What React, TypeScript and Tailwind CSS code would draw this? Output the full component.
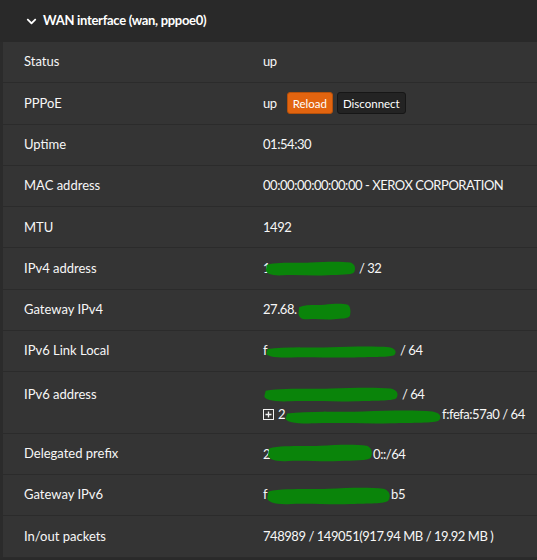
import { FaChevronDown } from "react-icons/fa";

function Blob({ w, h, className = "" }: { w: number; h: number; className?: string }) {
  return (
    <svg
      width={w}
      height={h}
      viewBox="0 0 100 20"
      preserveAspectRatio="none"
      className={"inline-block " + className}
    >
      <path
        d="M2 5 C15 1 35 3 50 2 C65 1 82 0 94 2 C99 4 100 10 98 15 C95 19 82 18 68 19 C52 20 35 18 20 19 C8 20 1 17 1 12 Z"
        fill="#0a840a"
      />
    </svg>
  );
}

function PlusSquare() {
  return (
    <svg width="11" height="11" viewBox="0 0 11 11" className="inline-block align-[-1px]">
      <rect x="0.5" y="0.5" width="10" height="10" fill="none" stroke="#f2f2f2" strokeWidth="1" />
      <path d="M5.5 2.5 V8.5 M2.5 5.5 H8.5" stroke="#f2f2f2" strokeWidth="1.3" />
    </svg>
  );
}

type Row = { label: string; value: React.ReactNode; tall?: boolean };

const ROWS: Row[] = [
  { label: "Status", value: "up" },
  {
    label: "PPPoE",
    value: (
      <span className="flex items-center">
        <span>up</span>
        <button className="ml-[10px] h-[22px] rounded-[3px] border border-[#b5500a] bg-[#e2640f] px-[5px] text-[11.5px] leading-none tracking-normal text-white">
          Reload
        </button>
        <button className="ml-[4px] h-[22px] rounded-[3px] border border-[#161616] bg-[#232323] px-[5px] text-[11.5px] leading-none tracking-normal text-white">
          Disconnect
        </button>
      </span>
    ),
  },
  { label: "Uptime", value: "01:54:30" },
  { label: "MAC address", value: "00:00:00:00:00:00 - XEROX CORPORATION" },
  { label: "MTU", value: "1492" },
  {
    label: "IPv4 address",
    value: (
      <span>
        1<Blob w={91} h={15} className="-ml-[5px] align-[-3px]" /> / 32
      </span>
    ),
  },
  {
    label: "Gateway IPv4",
    value: (
      <span>
        27.68.<Blob w={53} h={17} className="ml-[1px] align-[-6px]" />
      </span>
    ),
  },
  {
    label: "IPv6 Link Local",
    value: (
      <span>
        f<Blob w={132} h={12} className="-ml-[2px] align-[-3px]" /> / 64
      </span>
    ),
  },
  {
    label: "IPv6 address",
    tall: true,
    value: (
      <div className="flex flex-col">
        <span className="h-[20px]">
          <Blob w={136} h={15} className="align-[-3px]" /> / 64
        </span>
        <span className="h-[20px]">
          <PlusSquare />
          <span className="ml-[4px]">2</span>
          <Blob w={158} h={14} className="-ml-[1px] align-[-5px]" />f:fefa:57a0 / 64
        </span>
      </div>
    ),
  },
  {
    label: "Delegated prefix",
    value: (
      <span>
        2<Blob w={106} h={18} className="-ml-[3px] align-[-3px]" />0::/64
      </span>
    ),
  },
  {
    label: "Gateway IPv6",
    value: (
      <span>
        f<Blob w={125} h={18} className="-ml-[1px] align-[-6px]" />b5
      </span>
    ),
  },
  { label: "In/out packets", value: "748989 / 149051(917.94 MB / 19.92 MB )" },
];

export default function App() {
  return (
    <div
      className="h-[560px] w-[537px] overflow-hidden bg-[#2a2a2a] text-[13px] text-[#f7f7f7]"
      style={{ fontFamily: "Lato, 'Liberation Sans', sans-serif" }}
    >
      <div className="flex h-[42px] items-center bg-[#292929] pl-[26px]">
        <FaChevronDown className="h-[11px] w-[11px] text-white" />
        <span className="ml-[6px] text-[13px] font-bold tracking-[-0.3px] text-white">
          WAN interface (wan, pppoe0)
        </span>
      </div>
      <div className="border-l-[3px] border-[#2b2b2b]">
        {ROWS.map((r) => (
          <div
            key={r.label}
            className={
              "flex border-b border-[#2b2b2b] bg-[#343434] " +
              (r.tall ? "h-[61.3px] items-start pt-[12px] leading-[20px]" : "h-[41.3px] items-center")
            }
          >
            <div className="w-[260px] shrink-0 pl-[21px]">{r.label}</div>
            <div className="tracking-[-0.45px]">{r.value}</div>
          </div>
        ))}
      </div>
    </div>
  );
}
